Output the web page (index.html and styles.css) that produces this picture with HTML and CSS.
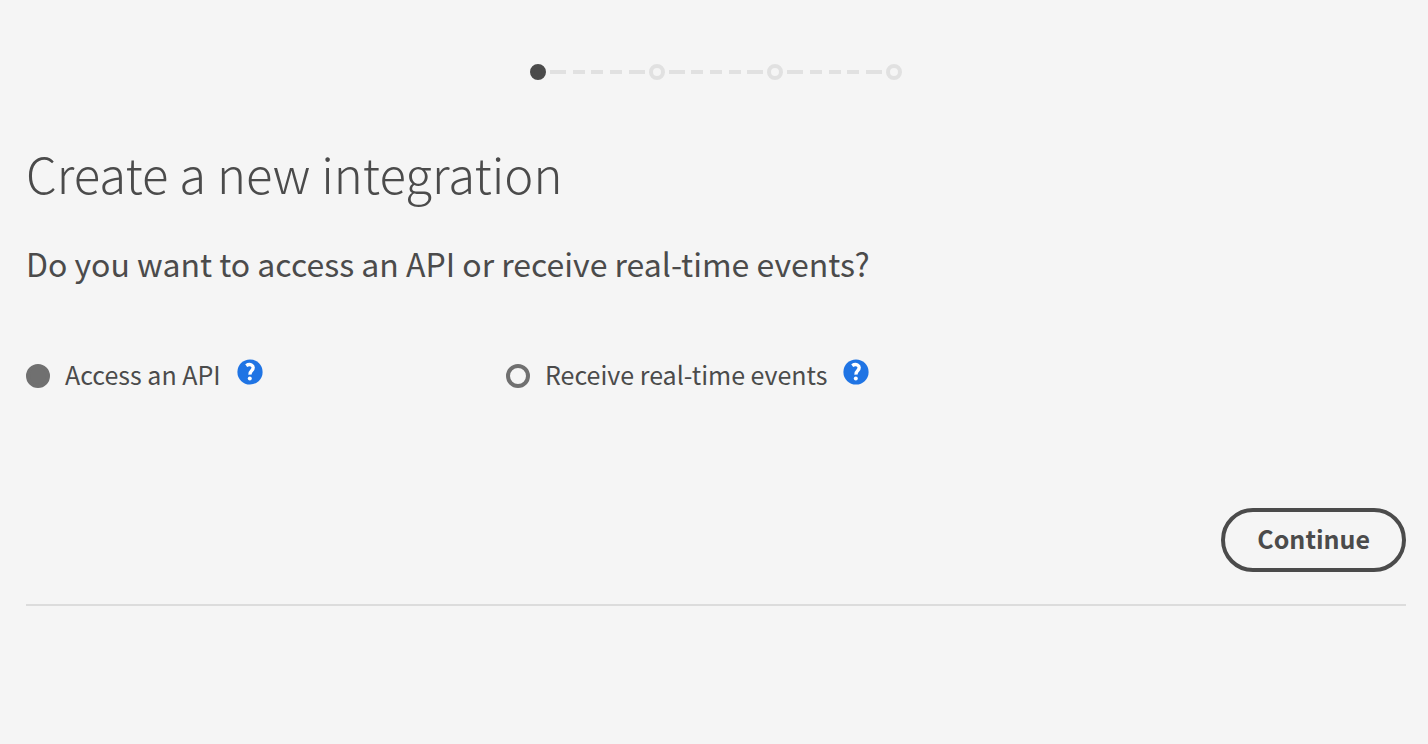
FILE: index.html
```html
<!DOCTYPE html>
<html lang="en">

<head>
  <meta charset="utf-8">
  <meta name="viewport" content="width=device-width, initial-scale=1">
  <title>Create a new integration</title>
  <link rel="stylesheet" href="styles.css">
</head>

<body>
  <main class="wizard">
    <div class="steps">
      <span class="step active"></span>
      <span class="step-line"><i></i><i></i><i></i><i></i><i></i></span>
      <span class="step"></span>
      <span class="step-line"><i></i><i></i><i></i><i></i><i></i></span>
      <span class="step"></span>
      <span class="step-line"><i></i><i></i><i></i><i></i><i></i></span>
      <span class="step"></span>
    </div>

    <h1 class="title">Create a new integration</h1>

    <form class="form">
      <h2 class="question">Do you want to access an API or receive real-time events?</h2>

      <div class="options">
        <div class="option">
          <input class="radio" type="radio" name="type" id="type-api" checked>
          <label class="label" for="type-api">Access an API</label>
          <button class="help" type="button" aria-label="Help: access an API">
            <svg class="help-icon" viewBox="0 0 26 26">
              <circle cx="13" cy="13" r="12.6" fill="#1f74e4"/>
              <path d="M9.2 6.6C10.8 5.5 13 5.2 14.4 5.9C16.9 7.1 16.5 9.8 14.8 11.4C13.5 12.6 12.9 13.3 13 15.6" fill="none" stroke="#fff" stroke-width="3.4"/>
              <circle cx="12.8" cy="19.4" r="2" fill="#fff"/>
            </svg>
          </button>
        </div>
        <div class="option">
          <input class="radio" type="radio" name="type" id="type-events">
          <label class="label" for="type-events">Receive real-time events</label>
          <button class="help" type="button" aria-label="Help: receive real-time events">
            <svg class="help-icon" viewBox="0 0 26 26">
              <circle cx="13" cy="13" r="12.6" fill="#1f74e4"/>
              <path d="M9.2 6.6C10.8 5.5 13 5.2 14.4 5.9C16.9 7.1 16.5 9.8 14.8 11.4C13.5 12.6 12.9 13.3 13 15.6" fill="none" stroke="#fff" stroke-width="3.4"/>
              <circle cx="12.8" cy="19.4" r="2" fill="#fff"/>
            </svg>
          </button>
        </div>
      </div>

      <div class="actions">
        <button class="continue" type="button">Continue</button>
      </div>
    </form>
  </main>
</body>
</html>
```

FILE: styles.css
```css
body {
  margin: 0;
  background-color: #f5f5f5;
  color: #4b4b4b;
  font-family: "Noto Sans CJK SC", "Noto Sans", sans-serif;
}

.wizard {
  padding: 64px 22px 0 26px;
}

.steps {
  display: flex;
  align-items: center;
  max-width: 372px;
  margin: 0 auto;
}

.step {
  box-sizing: border-box;
  width: 16px;
  height: 16px;
  border: 4px solid #e1e1e1;
  border-radius: 50%;
}

.step.active {
  background: #4b4b4b;
  border-color: #4b4b4b;
}

.step-line {
  flex: 1;
  display: flex;
  justify-content: space-between;
  padding: 0 4px;
}

.step-line i {
  width: 12px;
  height: 4px;
  background: #e1e1e1;
}

.step-line i:first-child,
.step-line i:last-child {
  width: 16px;
}

.title {
  margin: 61px 0 0;
  font-size: 49px;
  line-height: 64px;
  font-weight: 300;
}

.question {
  margin: 34px 0 0;
  font-size: 32px;
  line-height: 48px;
  font-weight: 400;
}

.form {
  padding-bottom: 32px;
  border-bottom: 2px solid #dcdcdc;
}

.options {
  display: flex;
  flex-wrap: wrap;
  margin-top: 69px;
}

.option {
  display: flex;
  align-items: center;
  min-width: 480px;
}

.radio {
  appearance: none;
  box-sizing: border-box;
  width: 24px;
  height: 24px;
  margin: 0 15px 0 0;
  border: 4px solid #707070;
  border-radius: 50%;
}

.radio:checked {
  background: #707070;
}

.label {
  padding-bottom: 4px;
  font-size: 25px;
  line-height: 36px;
}

.help {
  margin: 0 0 8px 16px;
  padding: 0;
  border: none;
  background: none;
  cursor: pointer;
}

.help-icon {
  display: block;
  width: 26px;
  height: 26px;
}

.actions {
  display: flex;
  justify-content: flex-end;
  margin-top: 112px;
}

.continue {
  height: 64px;
  padding: 0 32px 4px;
  border: 4px solid #4b4b4b;
  border-radius: 32px;
  background: none;
  color: inherit;
  font-family: inherit;
  font-size: 25px;
  font-weight: 700;
  cursor: pointer;
}
```
